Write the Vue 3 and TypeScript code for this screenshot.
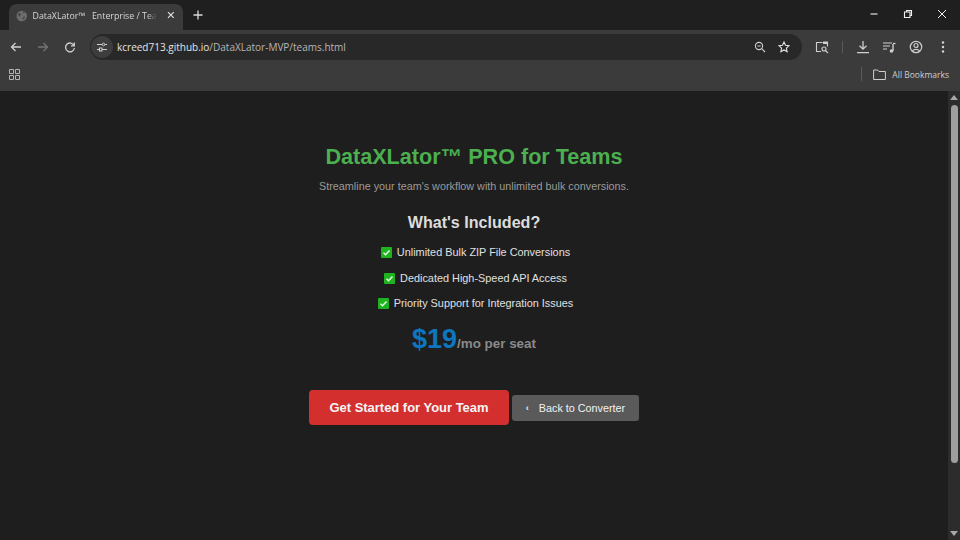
<script setup lang="ts">
const features: string[] = [
  'Unlimited Bulk ZIP File Conversions',
  'Dedicated High-Speed API Access',
  'Priority Support for Integration Issues',
]
</script>

<template>
  <div class="window">
    <header class="tabstrip">
      <div class="tab">
        <svg class="globe" viewBox="0 0 12 12" width="12" height="12">
          <circle cx="6" cy="6" r="5.5" fill="#6d6d6d" />
          <path d="M2 3.5l2.5-.5 1 1.5-1.5 2-1.5-.5zM7 7l2.5-.5-1 3-1.5.5zM6.5 1.2l2 .3 1 1.5-2 .2z" fill="#4b4b4b" />
        </svg>
        <span class="tab-title">DataXLator™&nbsp;&nbsp;&nbsp;Enterprise / Team</span>
        <svg class="tab-close" viewBox="0 0 8 8" width="8" height="8">
          <path d="M1 1l6 6M7 1L1 7" stroke="#e3e3e3" stroke-width="1.2" />
        </svg>
      </div>
      <svg class="newtab" viewBox="0 0 10 10" width="10" height="10">
        <path d="M5 .5v9M.5 5h9" stroke="#dcdcdc" stroke-width="1.3" />
      </svg>
      <div class="winbtns">
        <svg viewBox="0 0 10 10" width="10" height="10"><path d="M1.500 5h7" stroke="#f0f0f0" stroke-width="1.100" /></svg>
        <svg viewBox="0 0 10 10" width="10" height="10"><path d="M1.500 3h5.500v5.500h-5.500zM3.500 3v-1.500h5v5h-1.500" fill="none" stroke="#f0f0f0" stroke-width="1.100" /></svg>
        <svg viewBox="0 0 10 10" width="10" height="10"><path d="M1 1l8 8M9 1l-8 8" stroke="#f0f0f0" stroke-width="1" /></svg>
      </div>
    </header>

    <nav class="toolbar">
      <svg class="nav" viewBox="0 0 12 12" width="12" height="12"><path d="M11 6H1.500M5.500 2L1.500 6l4 4" fill="none" stroke="#cfcfcf" stroke-width="1.300" /></svg>
      <svg class="nav" viewBox="0 0 12 12" width="12" height="12"><path d="M1 6h9.500M6.500 2l4 4-4 4" fill="none" stroke="#747474" stroke-width="1.300" /></svg>
      <svg class="nav" viewBox="0 0 12 12" width="12" height="12"><path d="M10 4.500A4.400 4.400 0 1 0 10.400 7M10.300 1.500v3.300H7" fill="none" stroke="#cfcfcf" stroke-width="1.300" /></svg>
      <div class="omnibox">
        <span class="site-chip">
          <svg viewBox="0 0 12 12" width="12" height="12"><path d="M1 3.500h5M9 3.500h2M1 8.500h2M6 8.500h5" stroke="#d0d0d0" stroke-width="1.100" /><circle cx="7.500" cy="3.500" r="1.300" fill="none" stroke="#d0d0d0" /><rect x="3.500" y="7" width="2.500" height="3" fill="none" stroke="#d0d0d0" /></svg>
        </span>
        <span class="url"><b>kcreed713.github.io</b>/DataXLator-MVP/teams.html</span>
        <svg class="omni-icon" viewBox="0 0 12 12" width="12" height="12"><circle cx="5" cy="5" r="3.600" fill="none" stroke="#cfcfcf" stroke-width="1.100" /><path d="M7.700 7.700L11 11M3.300 5h3.400" stroke="#cfcfcf" stroke-width="1.100" /></svg>
        <svg class="omni-icon" viewBox="0 0 12 12" width="12" height="12"><path d="M6 1l1.500 3.300 3.500.4-2.600 2.400.7 3.500L6 8.900l-3.100 1.700.7-3.500L1 4.700l3.500-.4z" fill="none" stroke="#e0e0e0" stroke-width="1.100" /></svg>
      </div>
      <svg class="tool first" viewBox="0 0 14 14" width="14" height="14"><path d="M6 11.500H1.500v-9h6M9.500 2.500h3v4" fill="none" stroke="#cfcfcf" stroke-width="1.100" /><rect x="8" y="1.500" width="5" height="2.500" fill="#cfcfcf" /><circle cx="9" cy="9" r="2" fill="none" stroke="#cfcfcf" stroke-width="1.100" /><path d="M10.500 10.500l2.500 2.500" stroke="#cfcfcf" stroke-width="1.100" /></svg>
      <span class="sep"></span>
      <svg class="tool dl" viewBox="0 0 14 14" width="14" height="14"><path d="M7 1v8M3.500 5.700L7 9.200l3.500-3.500M1 12.700h12" fill="none" stroke="#cfcfcf" stroke-width="1.300" /></svg>
      <svg class="tool" viewBox="0 0 14 14" width="14" height="14"><path d="M1 3h9M1 6h7M1 9h4" stroke="#cfcfcf" stroke-width="1.200" /><path d="M11 4v7" stroke="#cfcfcf" stroke-width="1.400" /><circle cx="9.500" cy="11" r="1.800" fill="#cfcfcf" /><path d="M11 3.500h2.500" stroke="#cfcfcf" stroke-width="1.300" /></svg>
      <svg class="tool" viewBox="0 0 14 14" width="14" height="14"><circle cx="7" cy="7" r="5.700" fill="none" stroke="#cfcfcf" stroke-width="1.200" /><circle cx="7" cy="5.500" r="2" fill="none" stroke="#cfcfcf" stroke-width="1.200" /><path d="M3.300 10.700c2-1.800 5.400-1.800 7.400 0" fill="none" stroke="#cfcfcf" stroke-width="1.200" /></svg>
      <svg class="tool last" viewBox="0 0 14 14" width="14" height="14"><circle cx="7" cy="2.500" r="1.200" fill="#d5d5d5" /><circle cx="7" cy="7" r="1.200" fill="#d5d5d5" /><circle cx="7" cy="11.500" r="1.200" fill="#d5d5d5" /></svg>
    </nav>

    <div class="bookmarks">
      <svg viewBox="0 0 11 11" width="11" height="11"><path d="M.5.500h4v4h-4zM6.500.500h4v4h-4zM.5 6.500h4v4h-4zM6.500 6.500h4v4h-4z" fill="none" stroke="#b5b5b5" /></svg>
      <span class="bm-sep"></span>
      <svg class="folder" viewBox="0 0 13 11" width="13" height="11"><path d="M.6 1h4l1.300 1.500h6.500v8H.6z" fill="none" stroke="#cfcfcf" stroke-width="1" /></svg>
      <span class="bm-label">All Bookmarks</span>
    </div>

    <div class="viewport">
      <main class="page">
        <h1>DataXLator™ PRO for Teams</h1>
        <p class="lead">Streamline your team's workflow with unlimited bulk conversions.</p>
        <h2>What's Included?</h2>
        <ul>
          <li v-for="f in features" :key="f">
            <svg viewBox="0 0 11 11" width="11" height="11"><rect width="11" height="11" rx="1" fill="#1fb31f" /><path d="M2.500 5.800l2 2 4-4.300" fill="none" stroke="#eafbea" stroke-width="1.400" /></svg>
            <span>{{ f }}</span>
          </li>
        </ul>
        <div class="price"><span class="amount">$19</span><span class="per">/mo per seat</span></div>
        <div class="actions">
          <a class="cta">Get Started for Your Team</a>
          <a class="back"><span class="caret">‹</span>Back to Converter</a>
        </div>
      </main>
      <div class="scrollbar">
        <svg viewBox="0 0 8 5" width="8" height="5"><path d="M4 0l4 5H0z" fill="#a8a8a8" /></svg>
        <div class="thumb"></div>
        <svg class="down" viewBox="0 0 8 5" width="8" height="5"><path d="M4 5l4-5H0z" fill="#a8a8a8" /></svg>
      </div>
    </div>
  </div>
</template>

<style>
html, body { margin: 0; background: #1e1e1e; }
</style>

<style scoped>
.window {
  width: 960px;
  height: 540px;
  display: flex;
  flex-direction: column;
  overflow: hidden;
  font-family: "Liberation Sans", Arial, sans-serif;
  background: #1e1e1e;
}
.tabstrip {
  height: 30px;
  flex: none;
  display: flex;
  align-items: flex-end;
  background: #1f1f1f;
  box-sizing: border-box;
}
.tab {
  width: 174px;
  height: 26px;
  margin-left: 9px;
  box-sizing: border-box;
  padding: 0 8px 3px 7px;
  display: flex;
  align-items: center;
  background: #3b3b3b;
  border-radius: 8px 8px 0 0;
}
.tab-title {
  width: 130px;
  margin-left: 5px;
  margin-right: 10px;
  font-family: "Open Sans", sans-serif;
  font-size: 8.8px;
  color: #d6d6d6;
  white-space: nowrap;
  overflow: hidden;
  -webkit-mask-image: linear-gradient(to right, #000 92%, transparent);
  mask-image: linear-gradient(to right, #000 92%, transparent);
}
.tab-close { margin-bottom: 2px; }
.newtab { margin: 0 0 10px 10px; }
.winbtns {
  margin-left: auto;
  height: 30px;
  display: flex;
  align-items: center;
  gap: 24px;
  padding: 0 13px 2px 0;
  box-sizing: border-box;
}
.toolbar {
  height: 32px;
  flex: none;
  display: flex;
  align-items: center;
  background: #3b3b3b;
  padding: 2px 0 0 10px;
  box-sizing: border-box;
}
.nav { margin-right: 15px; flex: none; }
.omnibox {
  flex: none;
  width: 712px;
  height: 26px;
  margin-left: -1px;
  display: flex;
  align-items: center;
  background: #282828;
  border-radius: 13px;
  box-sizing: border-box;
}
.site-chip {
  width: 22px;
  height: 22px;
  margin-left: 1px;
  border-radius: 50%;
  background: #3d3d3d;
  display: flex;
  align-items: center;
  justify-content: center;
}
.url {
  margin-left: 4px;
  font-family: "Open Sans", sans-serif;
  font-size: 10px;
  color: #b6b6b6;
  flex: 1;
  white-space: nowrap;
}
.url b { font-weight: 400; color: #e4e4e4; }
.omni-icon { margin-right: 12px; }
.tool { margin-right: 13px; flex: none; }
.tool.first { margin-left: 13px; }
.tool.dl { margin-right: 12px; }
.tool.last { margin-right: 0; }
.sep {
  width: 1px;
  height: 12px;
  background: #5a5a5a;
  margin-right: 13px;
  flex: none;
}
.bookmarks {
  height: 29px;
  flex: none;
  display: flex;
  align-items: center;
  background: #3b3b3b;
  padding: 0 11px 5px 9px;
  box-sizing: border-box;
}
.bm-sep {
  width: 1px;
  height: 14px;
  background: #5a5a5a;
  margin-left: auto;
  margin-right: 11px;
}
.bm-label {
  margin-left: 6px;
  font-family: "Open Sans", sans-serif;
  font-size: 8.5px;
  color: #cfcfcf;
}
.viewport {
  flex: 1;
  display: flex;
  min-height: 0;
  background: #1e1e1e;
}
.page {
  flex: 1;
  display: flex;
  flex-direction: column;
  align-items: center;
  padding-top: 53px;
  color: #e0e0e0;
}
h1 {
  margin: 0;
  font-size: 21.6px;
  line-height: 26px;
  font-weight: 700;
  color: #4caf50;
}
.lead {
  margin: 10px 0 0;
  font-size: 10.8px;
  line-height: 13px;
  color: #9a9a9a;
}
h2 {
  margin: 20px 0 0;
  font-size: 16.1px;
  line-height: 18px;
  font-weight: 700;
  color: #dcdcdc;
}
ul {
  list-style: none;
  margin: 15px 0 0;
  padding: 0 0 0 3px;
  display: flex;
  flex-direction: column;
  align-items: center;
  gap: 12.6px;
}
li {
  display: flex;
  align-items: center;
  gap: 5px;
  font-size: 10.88px;
  line-height: 13px;
  color: #e0e0e0;
}
.price {
  margin-top: 13px;
  display: flex;
  align-items: baseline;
  font-weight: 700;
}
.amount {
  font-size: 27px;
  line-height: 32px;
  color: #0d76bf;
}
.per {
  font-size: 13.4px;
  color: #8a8a8a;
}
.actions {
  margin-top: 35px;
  display: flex;
  align-items: center;
  gap: 3px;
}
.cta {
  width: 200px;
  height: 35px;
  display: flex;
  align-items: center;
  justify-content: center;
  background: #d32f2f;
  color: #f4f4f4;
  font-size: 12.96px;
  font-weight: 700;
  border-radius: 4px;
}
.back {
  width: 127px;
  height: 26px;
  display: flex;
  align-items: center;
  justify-content: center;
  background: #5a5a5a;
  color: #f2f2f2;
  font-size: 10.8px;
  border-radius: 3px;
}
.caret { margin-right: 10px; font-size: 9px; font-weight: 700; }
.scrollbar {
  width: 12px;
  flex: none;
  display: flex;
  flex-direction: column;
  align-items: center;
  background: #2c2c2c;
  padding: 4px 0 4px;
  box-sizing: border-box;
}
.thumb {
  width: 7px;
  height: 358px;
  margin-top: 5px;
  background: #9e9e9e;
  border-radius: 4px;
}
.down { margin-top: auto; }
</style>
